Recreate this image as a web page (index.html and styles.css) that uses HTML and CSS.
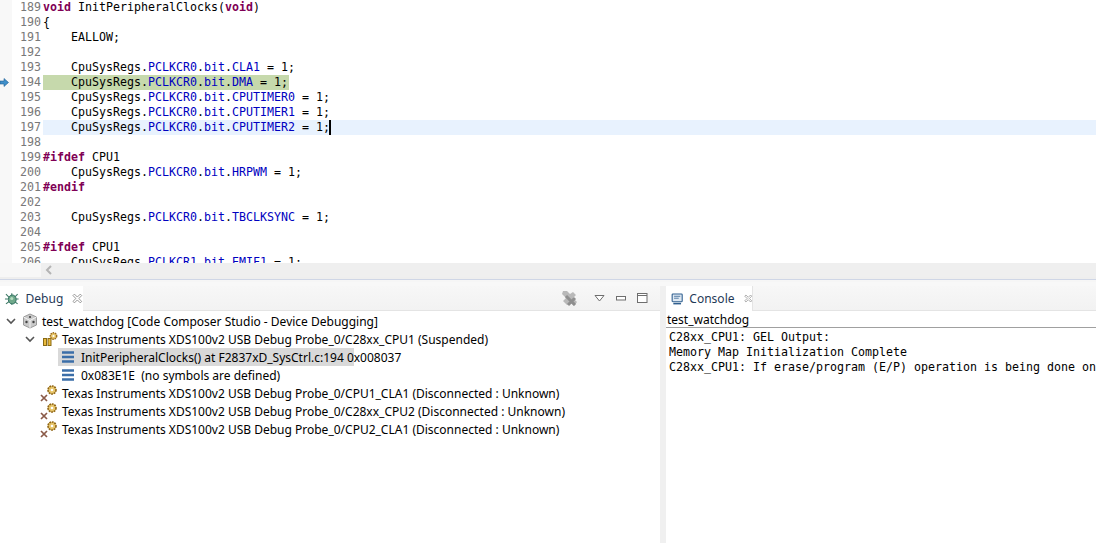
FILE: index.html
```html
<!DOCTYPE html>
<html lang="en">
<head>
    <meta charset="UTF-8">
    <title>Code Composer Studio - Debug</title>
    <link rel="stylesheet" href="styles.css">
</head>
<body>
    <!-- Editor -->
    <section class="editor">
        <div class="code-area">
            <div class="ruler">
                <svg class="ip-arrow" width="9" height="9" viewBox="0 0 9 9"><path d="M0 3h4V0.5L8.5 4.5 4 8.5V6H0z" fill="#3f8fc9" stroke="#1f5f95" stroke-width="0.6"/></svg>
            </div>
            <pre class="line-numbers">189
190
191
192
193
194
195
196
197
198
199
200
201
202
203
204
205
206</pre>
            <div class="code">
                <div class="line"><b>void</b> InitPeripheralClocks(<b>void</b>)</div>
                <div class="line">{</div>
                <div class="line">    EALLOW;</div>
                <div class="line"> </div>
                <div class="line">    CpuSysRegs.<i>PCLKCR0</i>.<i>bit</i>.<i>CLA1</i> = 1;</div>
                <div class="line"><span class="pc-line">    CpuSysRegs.<i>PCLKCR0</i>.<i>bit</i>.<i>DMA</i> = 1;</span></div>
                <div class="line">    CpuSysRegs.<i>PCLKCR0</i>.<i>bit</i>.<i>CPUTIMER0</i> = 1;</div>
                <div class="line">    CpuSysRegs.<i>PCLKCR0</i>.<i>bit</i>.<i>CPUTIMER1</i> = 1;</div>
                <div class="line current">    CpuSysRegs.<i>PCLKCR0</i>.<i>bit</i>.<i>CPUTIMER2</i> = 1;<span class="caret"></span></div>
                <div class="line"> </div>
                <div class="line"><b>#ifdef</b> CPU1</div>
                <div class="line">    CpuSysRegs.<i>PCLKCR0</i>.<i>bit</i>.<i>HRPWM</i> = 1;</div>
                <div class="line"><b>#endif</b></div>
                <div class="line"> </div>
                <div class="line">    CpuSysRegs.<i>PCLKCR0</i>.<i>bit</i>.<i>TBCLKSYNC</i> = 1;</div>
                <div class="line"> </div>
                <div class="line"><b>#ifdef</b> CPU1</div>
                <div class="line">    CpuSysRegs.<i>PCLKCR1</i>.<i>bit</i>.<i>EMIF1</i> = 1;</div>
            </div>
        </div>
        <div class="hscroll">
            <div class="hscroll-corner"></div>
            <div class="hscroll-track">
                <svg width="8" height="10" viewBox="0 0 8 10"><path d="M6 1L2 5l4 4" fill="none" stroke="#b4b4b4" stroke-width="2"/></svg>
            </div>
        </div>
    </section>

    <div class="sash-h"></div>

    <!-- Vistas de abajo -->
    <div class="views">
        <section class="view debug-view">
            <div class="tab-bar">
                <div class="tab debug-tab">
                    <svg class="tab-icon" width="16" height="16" viewBox="0 0 16 16">
                        <path d="M8 2L8 14M2 3l4 4M14 3l-4 4M1 8h3M12 8h3M2 13l4-3M14 13l-4-3" stroke="#3e7a66" stroke-width="1.1" fill="none"/>
                        <ellipse cx="8.5" cy="8.5" rx="4" ry="4.6" fill="#6fa88a" stroke="#2f6f60"/>
                        <circle cx="8" cy="7.5" r="1.6" fill="#b6dcc0"/>
                    </svg>
                    <span>Debug</span>
                    <svg class="close" width="11" height="11" viewBox="0 0 11 11"><path d="M1 2.5L2.5 1 5.5 4 8.5 1 10 2.5 7 5.5 10 8.5 8.5 10 5.5 7 2.5 10 1 8.5 4 5.5z" fill="#fff" stroke="#8a8a8a" stroke-width="0.9"/></svg>
                </div>
                <div class="tab-tools">
                    <svg class="remove-all" width="17" height="17" viewBox="0 0 17 17">
                        <path d="M2 1l4 0 3 3 3-2 3 3-3 3 4 4-3 4-4-4-3 3-4-4 3-3-4-4z" fill="#b9b9b9"/>
                        <path d="M5 6l9 9M14 8l-7 7" stroke="#8f8f8f" stroke-width="3"/>
                    </svg>
                    <svg class="view-menu" width="11" height="7" viewBox="0 0 11 7"><path d="M1 .5h9L5.500 6z" fill="#fff" stroke="#6e6e6e"/></svg>
                    <svg class="minimize" width="10" height="5" viewBox="0 0 10 5"><rect x=".5" y=".5" width="9" height="3.500" fill="#fff" stroke="#6e6e6e"/></svg>
                    <svg class="maximize" width="11" height="10" viewBox="0 0 11 10"><rect x=".5" y=".5" width="9.500" height="9" fill="#fff" stroke="#6e6e6e"/><path d="M.5 2.500h9.500" stroke="#6e6e6e"/></svg>
                </div>
            </div>
            <div class="tree">
                <div class="row level-0">
                    <svg class="twistie" width="10" height="7" viewBox="0 0 10 7"><path d="M1 1l4 4 4-4" fill="none" stroke="#555" stroke-width="1.600"/></svg>
                    <svg class="icon" width="16" height="16" viewBox="0 0 16 16">
                        <path d="M8 1l6.500 3v8L8 15l-6.500-3V4z" fill="#c9c9c9" stroke="#9a9a9a"/>
                        <path d="M1.500 4L8 7.500 14.500 4M8 7.500V15" fill="none" stroke="#f2f2f2"/>
                        <circle cx="8" cy="4" r="1.100" fill="#444"/><circle cx="4.500" cy="9" r="1.200" fill="#444"/><circle cx="11.500" cy="9" r="1.200" fill="#444"/>
                    </svg>
                    <span>test_watchdog [Code Composer Studio - Device Debugging]</span>
                </div>
                <div class="row level-1">
                    <svg class="twistie" width="10" height="7" viewBox="0 0 10 7"><path d="M1 1l4 4 4-4" fill="none" stroke="#555" stroke-width="1.600"/></svg>
                    <svg class="icon" width="16" height="16" viewBox="0 0 16 16">
                        <rect x="1.500" y="7.500" width="3" height="7" fill="#e8b93c" stroke="#8a6a14"/>
                        <rect x="6" y="7.500" width="3" height="7" fill="#e8b93c" stroke="#8a6a14"/>
                        <circle cx="11.500" cy="5" r="3.200" fill="#e7c56a" stroke="#9a6a1c" stroke-width="1.400" stroke-dasharray="1.500 .8"/>
                        <circle cx="11.500" cy="5" r="1.100" fill="#fff"/>
                    </svg>
                    <span>Texas Instruments XDS100v2 USB Debug Probe_0/C28xx_CPU1 (Suspended)</span>
                </div>
                <div class="row level-2 selected">
                    <svg class="frame" width="12" height="12" viewBox="0 0 12 12"><path d="M0 1.500h12M0 6h12M0 10.500h12" stroke="#3b6ea8" stroke-width="2.600"/></svg>
                    <span>InitPeripheralClocks() at F2837xD_SysCtrl.c:194 0x008037</span>
                </div>
                <div class="row level-2">
                    <svg class="frame" width="12" height="12" viewBox="0 0 12 12"><path d="M0 1.500h12M0 6h12M0 10.500h12" stroke="#3b6ea8" stroke-width="2.600"/></svg>
                    <span>0x083E1E&nbsp; (no symbols are defined)</span>
                </div>
                <div class="row level-3">
                    <svg class="icon core" width="24" height="18" viewBox="0 0 24 18">
                        <path d="M2 11l6 6M8 11l-6 6" stroke="#8a5a48" stroke-width="1.700"/>
                        <circle cx="13" cy="6" r="4" fill="#e7c56a" stroke="#8f6414" stroke-width="1.600" stroke-dasharray="1.800 .8"/>
                        <circle cx="13" cy="6" r="1.300" fill="#fff"/>
                    </svg>
                    <span>Texas Instruments XDS100v2 USB Debug Probe_0/CPU1_CLA1 (Disconnected : Unknown)</span>
                </div>
                <div class="row level-3">
                    <svg class="icon core" width="24" height="18" viewBox="0 0 24 18">
                        <path d="M2 11l6 6M8 11l-6 6" stroke="#8a5a48" stroke-width="1.700"/>
                        <circle cx="13" cy="6" r="4" fill="#e7c56a" stroke="#8f6414" stroke-width="1.600" stroke-dasharray="1.800 .8"/>
                        <circle cx="13" cy="6" r="1.300" fill="#fff"/>
                    </svg>
                    <span>Texas Instruments XDS100v2 USB Debug Probe_0/C28xx_CPU2 (Disconnected : Unknown)</span>
                </div>
                <div class="row level-3">
                    <svg class="icon core" width="24" height="18" viewBox="0 0 24 18">
                        <path d="M2 11l6 6M8 11l-6 6" stroke="#8a5a48" stroke-width="1.700"/>
                        <circle cx="13" cy="6" r="4" fill="#e7c56a" stroke="#8f6414" stroke-width="1.600" stroke-dasharray="1.800 .8"/>
                        <circle cx="13" cy="6" r="1.300" fill="#fff"/>
                    </svg>
                    <span>Texas Instruments XDS100v2 USB Debug Probe_0/CPU2_CLA1 (Disconnected : Unknown)</span>
                </div>
            </div>
        </section>

        <div class="sash-v"></div>

        <section class="view console-view">
            <div class="tab-bar">
                <div class="tab console-tab">
                    <svg class="tab-icon" width="16" height="16" viewBox="0 0 16 16">
                        <rect x="1.500" y="1.500" width="13" height="10" rx="1" fill="#dfe9f3" stroke="#2f5f8f" stroke-width="1.400"/>
                        <path d="M4 4.500h8M4 7h6" stroke="#2f5f8f"/>
                        <path d="M3 14h10" stroke="#2f5f8f" stroke-width="2"/>
                    </svg>
                    <span>Console</span>
                    <svg class="close" width="11" height="11" viewBox="0 0 11 11"><path d="M1 2.500L2.500 1 5.500 4 8.500 1 10 2.500 7 5.500 10 8.500 8.500 10 5.500 7 2.500 10 1 8.500 4 5.500z" fill="#fff" stroke="#8a8a8a" stroke-width="0.9"/></svg>
                </div>
            </div>
            <div class="console-title">test_watchdog</div>
            <pre class="console-output">C28xx_CPU1: GEL Output:
Memory Map Initialization Complete
C28xx_CPU1: If erase/program (E/P) operation is being done on one core, the other core should not be running</pre>
        </section>
    </div>
</body>
</html>
```
FILE: styles.css
```css
* {
    margin: 0;
    padding: 0;
    box-sizing: border-box;
}

html, body {
    height: 100%;
    overflow: hidden;
}

body {
    display: flex;
    flex-direction: column;
    background-color: #f0f0f0;
    font-family: "Noto Sans", sans-serif;
    font-size: 12px;
    color: #000;
}

/* Editor */
.editor {
    height: 277px;
    display: flex;
    flex-direction: column;
    background-color: #fff;
}

.code-area {
    height: 263px;
    display: flex;
    overflow: hidden;
}

.ruler {
    width: 12px;
    background-color: #f8f8f8;
    padding-top: 78px;
    flex-shrink: 0;
}

.ip-arrow {
    display: block;
}

.line-numbers,
.code,
.console-output {
    font-family: "DejaVu Sans Mono", monospace;
    font-size: 11.63px;
    line-height: 15px;
}

.line-numbers {
    width: 29px;
    text-align: right;
    color: #787878;
    flex-shrink: 0;
}

.code {
    flex: 1;
    margin-left: 2px;
}

.line {
    height: 15px;
    white-space: pre;
}

.line b {
    color: #7f0055;
}

.line i {
    font-style: normal;
    color: #0000c0;
}

.pc-line {
    display: inline-block;
    background-color: #c6d9ac;
    padding-right: 1px;
}

.current {
    background-color: #e8f2fe;
}

.caret {
    display: inline-block;
    width: 2px;
    height: 15px;
    background-color: #000;
    vertical-align: top;
    margin-left: -1px;
}

.hscroll {
    height: 14px;
    display: flex;
}

.hscroll-corner {
    width: 41px;
    background-color: #f7f7f7;
}

.hscroll-track {
    flex: 1;
    background-color: #efefef;
    padding: 2px 0 0 4px;
}

.hscroll-track svg {
    display: block;
}

.sash-h {
    height: 9px;
    background-color: #f6f6f6;
    border-top: 2px solid #eeeeee;
    border-bottom: 4px solid #f8f8f8;
    box-shadow: inset 0 1px 0 #cfd6e6;
}

/* Vistas */
.views {
    flex: 1;
    display: flex;
    min-height: 0;
}

.view {
    background-color: #fff;
    display: flex;
    flex-direction: column;
    min-width: 0;
    overflow: hidden;
}

.debug-view {
    width: 660px;
}

.sash-v {
    width: 6px;
    background-color: #f0f0f0;
}

.console-view {
    flex: 1;
}

.tab-bar {
    height: 25px;
    display: flex;
    justify-content: space-between;
    background: linear-gradient(#f7f7f7, #f2f2f2);
    border-bottom: 1px solid #e4e4e4;
    flex-shrink: 0;
}

.tab {
    height: 25px;
    display: flex;
    align-items: center;
    background-color: #fff;
    font-size: 12px;
    color: #1f3a57;
    padding-left: 4px;
}

.debug-tab {
    width: 83px;
}

.console-tab {
    width: 87px;
    padding-left: 5px;
    border-right: 1px solid #e4e4e4;
}

.tab-icon {
    margin-right: 6px;
}

.tab .close {
    margin-left: 9px;
}

.tab-tools {
    display: flex;
    align-items: center;
    gap: 11px;
    padding-right: 12px;
}

.remove-all {
    margin-right: 5px;
}

/* Arbol */
.tree {
    padding-top: 1px;
    color: #000;
}

.row {
    height: 18px;
    display: flex;
    align-items: center;
    white-space: nowrap;
}

.row svg {
    flex-shrink: 0;
}

.twistie {
    margin-right: 6px;
}

.icon {
    margin-right: 4px;
}

.level-0 {
    padding-left: 6px;
}

.level-1 {
    padding-left: 25px;
}

.level-1 .icon {
    margin-left: 1px;
}

.level-2 {
    margin-left: 58px;
    padding-left: 4px;
    width: 296px;
}

.frame {
    margin-right: 7px;
}

.level-3 {
    padding-left: 39px;
}

.level-3 .icon {
    margin-right: -1px;
}

.selected {
    background-color: #d9d9d9;
}

/* Consola */
.console-title {
    height: 17px;
    padding: 1px 0 0 1px;
    line-height: 15px;
    border-bottom: 1px solid #a0a0a0;
    flex-shrink: 0;
}

.console-output {
    padding: 2px 0 0 3px;
    white-space: pre;
}
```
